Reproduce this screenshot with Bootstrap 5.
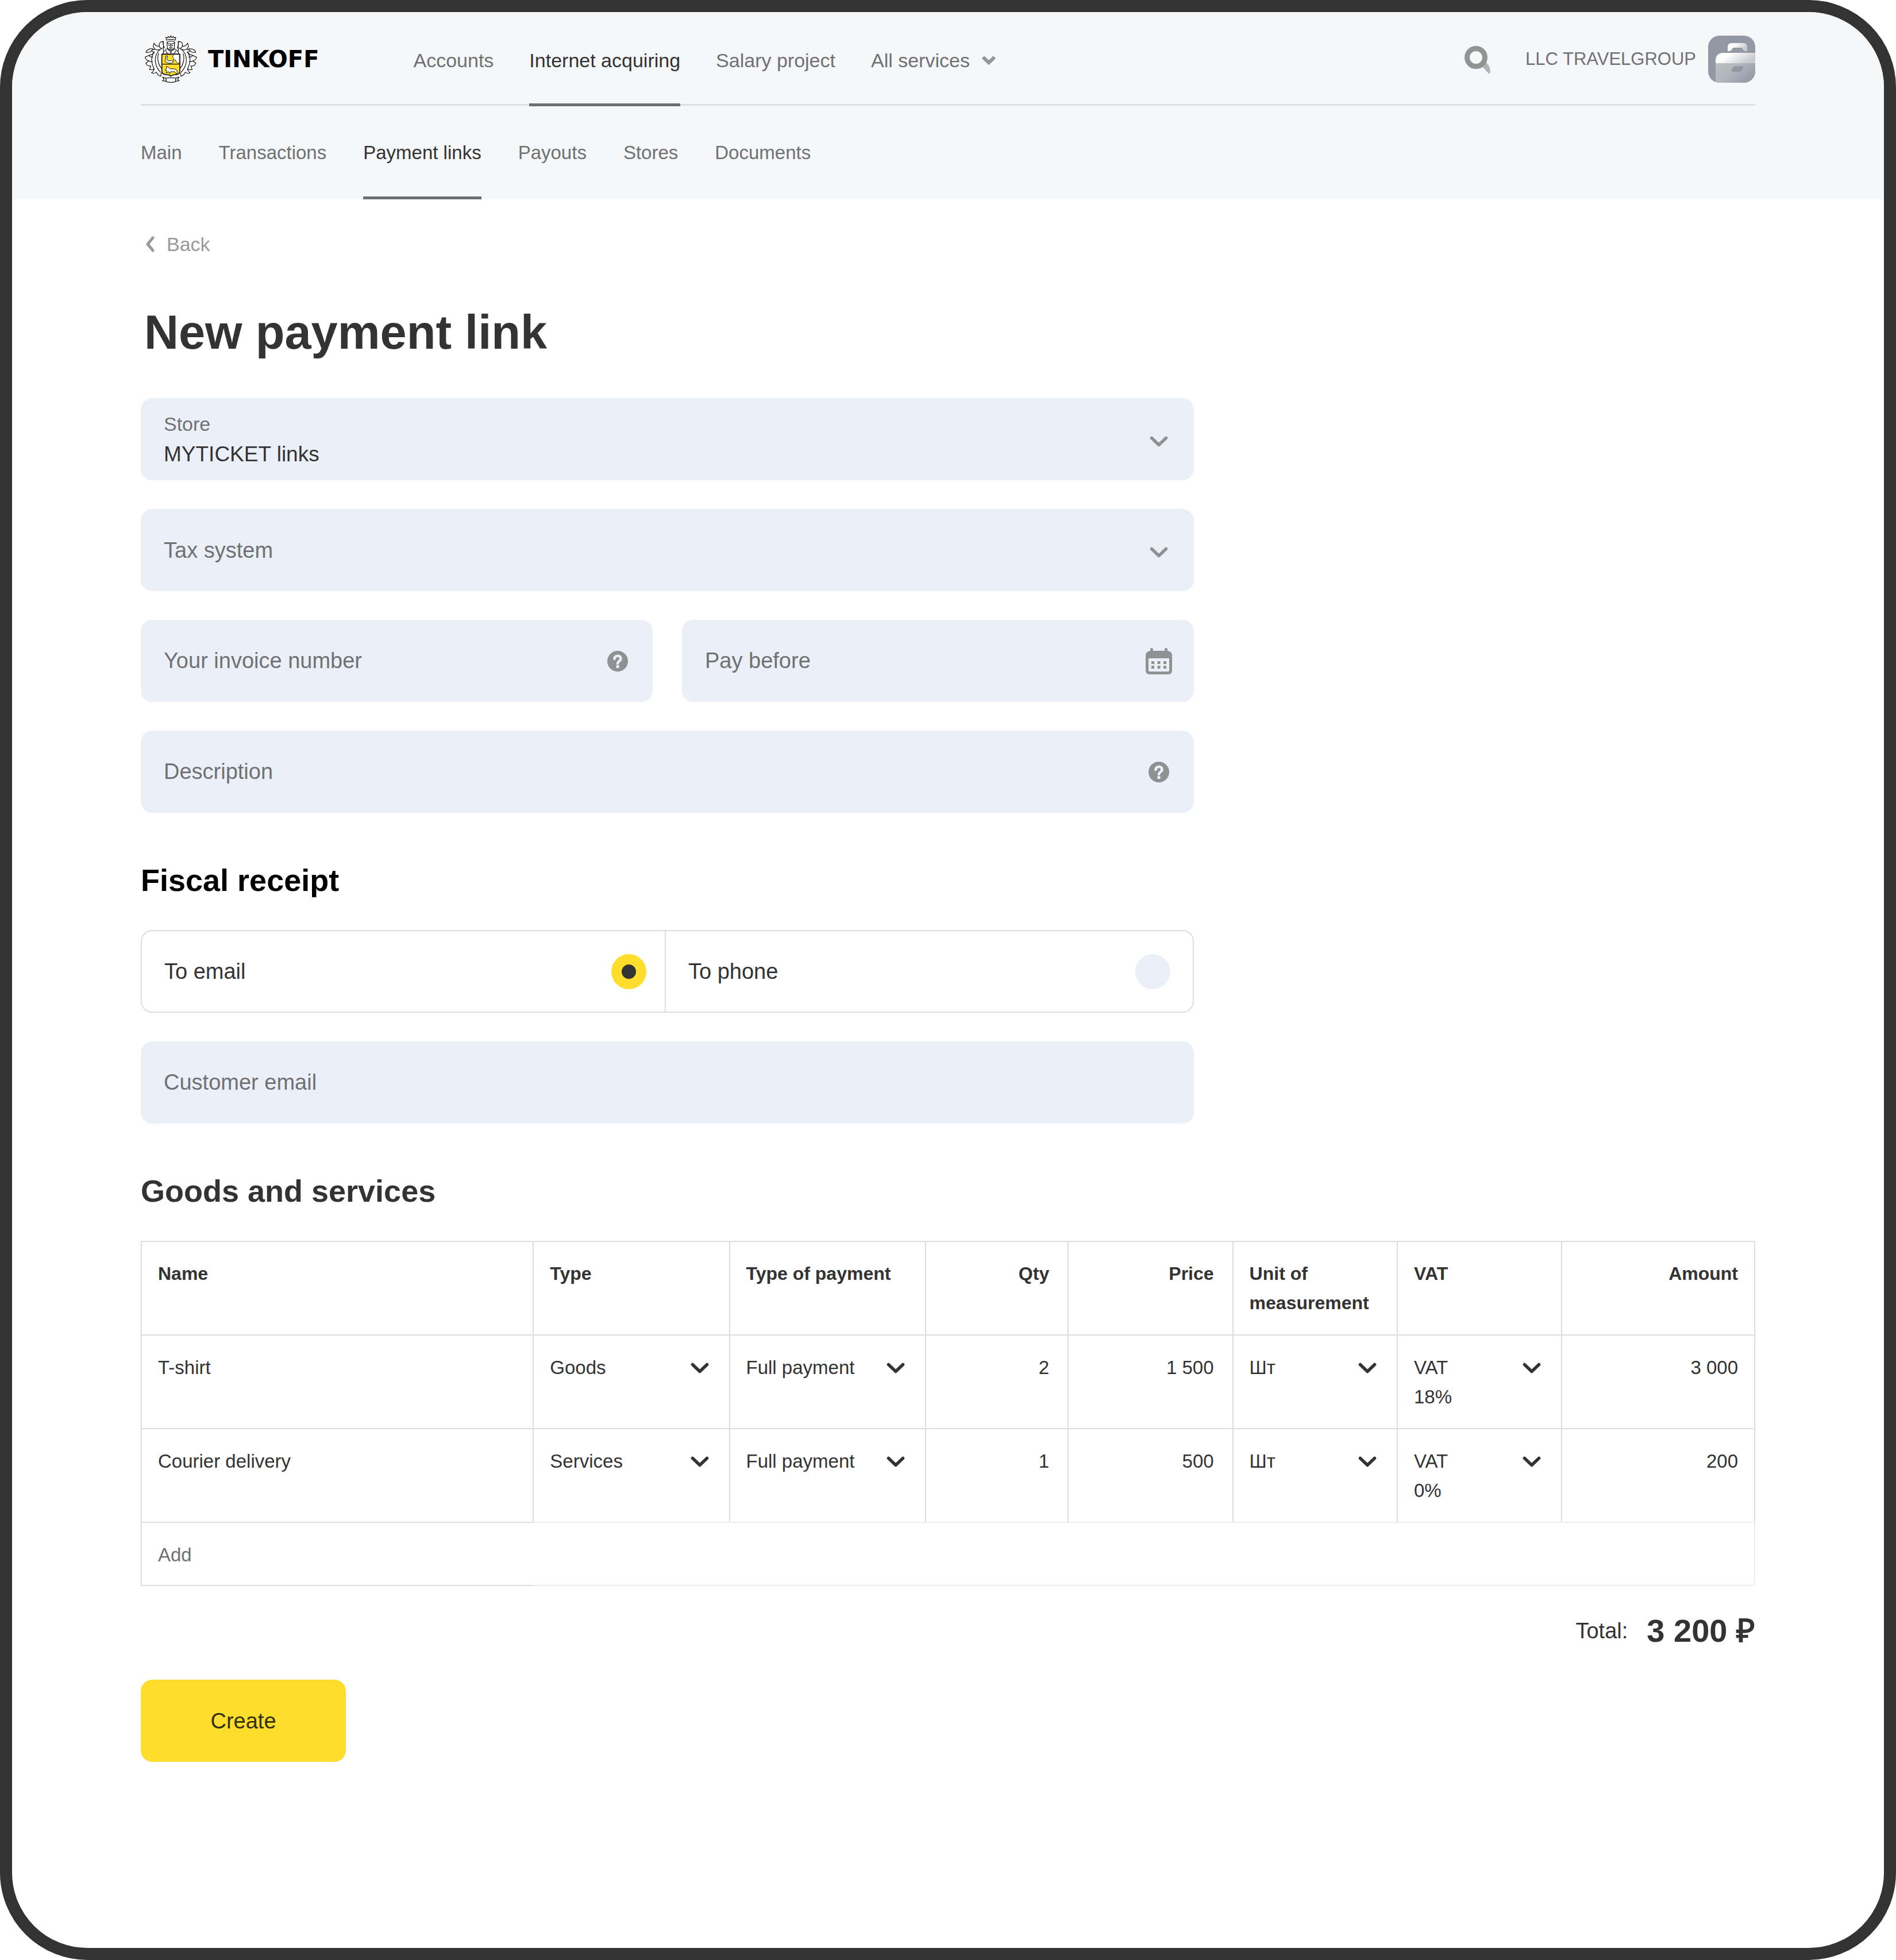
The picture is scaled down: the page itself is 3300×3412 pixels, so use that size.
<!DOCTYPE html>
<html lang="en">
<head>
<meta charset="utf-8">
<meta name="viewport" content="width=device-width, initial-scale=1">
<title>New payment link</title>
<link href="https://cdn.jsdelivr.net/npm/bootstrap@5.3.0/dist/css/bootstrap.min.css" rel="stylesheet">
<style>
  :root { --ink: #333; --muted: #707173; --field: #ebf0f8; --rule: #dedede; --brand: #ffdd2d; }
  body { font-family: "Liberation Sans", Arial, sans-serif; font-size: 34px; line-height: 50px; color: var(--ink); background: #fff; }
  a { text-decoration: none; }
  .frame { border: 21px solid #333; border-radius: 152px; }
  .gutter { padding-left: 224px; padding-right: 224px; }
  svg { flex: none; display: block; }

  .site-head { background: #f6f7f9; }
  .bar-top { height: 163px; padding-top: 3px; border-bottom: 3px solid #dfe0e1; }
  .bar-sub { height: 163px; gap: 64px; font-size: 33px; }
  .brand { gap: 17px; padding-left: 5px; color: #000; margin-right: 164px; font: bold 40px/50px "DejaVu Sans", sans-serif; }
  .main-menu { gap: 62px; }
  .tab { display: flex; align-items: center; gap: 20px; color: var(--muted); border-top: 5px solid transparent; border-bottom: 5px solid transparent; }
  .tab.active { color: var(--ink); border-bottom-color: #6e6f70; }
  .main-menu .tab { margin-bottom: -4px; }
  .plain-btn { background: none; border: 0; padding: 0; color: var(--muted); }
  .main-menu .plain-btn { border-top: 5px solid transparent; border-bottom: 5px solid transparent; }
  .account { font-size: 31px; color: var(--muted); gap: 21px; margin-left: 59px; }

  .page-body { padding-top: 53px; padding-bottom: 160px; }
  .back-link { color: #999; gap: 21px; padding-left: 8px; }
  h1 { font-size: 83px; line-height: 96px; font-weight: 700; margin: 81px 0 66px; padding-left: 6px; }
  h2 { font-size: 54px; line-height: 64px; font-weight: 700; margin: 85px 0 55px; }
  .form-col { max-width: 1833px; }
  .stack { display: flex; flex-direction: column; gap: 50px; }

  .field { display: grid; grid-template: 143px / 1fr; align-items: center; border-radius: 20px; background: var(--field); font-size: 38px; overflow: hidden; }
  .field > * { grid-area: 1 / 1; }
  .field .form-control, .field .form-select { height: 143px; border: 0; border-radius: 20px; background: transparent; padding: 0 110px 0 40px; font-size: 38px; line-height: 50px; color: var(--ink); }
  .field .form-control::placeholder { color: var(--muted); opacity: 1; }
  .field .form-select.unset { color: var(--muted); }
  .field .form-select.has-caption { padding-top: 53px; font-size: 37px; }
  .field label { align-self: start; font-size: 34px; line-height: 40px; margin: 25px 0 0 40px; color: var(--muted); pointer-events: none; }
  .field svg { justify-self: end; margin-right: 37px; pointer-events: none; color: #8f9193; }
  .pair { gap: 51px; }
  .pair .field { flex: 1; }
  .field svg.arrow { margin-top: 8px; }

  .choice { height: 144px; border: 2px solid var(--rule); border-radius: 20px; font-size: 38px; }
  .choice label { flex: 1; display: flex; align-items: center; justify-content: space-between; padding: 0 32px 0 39px; }
  .choice label + label { border-left: 2px solid var(--rule); padding-right: 39px; flex: 1 0 8px; }
  .choice input { appearance: none; width: 61px; height: 61px; border-radius: 50%; margin: 0; background: var(--field); }
  .choice input:checked { background: radial-gradient(circle, #333 12px, var(--brand) 13px); }

  .goods { table-layout: fixed; border-collapse: collapse; font-size: 33px; line-height: 51px; margin: 0; }
  .goods > * > tr > * { padding: 30px 32px 29px 28px; border: 2px solid var(--rule); color: var(--ink); vertical-align: top; box-shadow: none; background: none; }
  .goods thead th { font-size: 32px; font-weight: 700; }
  .goods > * > tr > :last-child { padding-right: 28px; }
  .goods tbody tr:last-child td:not(:first-child) { border-bottom-color: #ededed; }
  .goods > tfoot > tr > td { padding-bottom: 27px; }
  .goods > tfoot > tr > td:first-child { border-right: 0; }
  .goods > tfoot > tr > td:last-child { border-left: 0; border-color: #ededed; }
  .pick { display: grid; grid-template-columns: 1fr; }
  .pick select { grid-area: 1 / 1; appearance: none; border: 0; background: transparent; padding: 0; width: 100%; height: 51px; line-height: 51px; color: var(--ink); }
  .pick svg { grid-area: 1 / 1; justify-self: end; align-self: start; margin-top: 17px; margin-right: 3px; pointer-events: none; }
  .pick label { grid-area: 1 / 1; }
  .pick label ~ select { grid-area: 2 / 1; }

  .total { margin-top: 46px; gap: 33px; font-size: 38px; line-height: 64px; }
  .total strong { font-size: 56px; }
  .create { margin-top: 53px; width: 357px; height: 143px; border: 0; border-radius: 20px; background: var(--brand); color: #33300f; font-size: 38px; }
</style>
</head>
<body>
<svg width="0" height="0" class="position-absolute" aria-hidden="true">
  <defs>
    <symbol id="chev" viewBox="0 0 32 19"><path d="M3.500 3.500 16 15.500 28.500 3.500" fill="none" stroke="currentColor" stroke-width="5.500" stroke-linecap="round" stroke-linejoin="round"/></symbol>
    <symbol id="help" viewBox="0 0 48 48"><circle cx="24" cy="24" r="18" fill="currentColor"/><path d="M18.500 20c0-7 11-7 11-.5 0 4.500-5.500 4.500-5.500 8.500" fill="none" stroke="#ebf0f8" stroke-width="4.500" stroke-linecap="round"/><circle cx="24" cy="33.500" r="2.800" fill="#ebf0f8"/></symbol>
  </defs>
</svg>
<div class="frame min-vh-100 overflow-hidden">
  <header class="site-head gutter">
    <nav class="bar-top d-flex align-items-stretch" aria-label="Primary">
      <a href="#" class="brand d-flex align-items-center">
        <svg width="95" height="85" viewBox="90 60 285 255" aria-hidden="true">
          <defs>
            <g id="wing">
              <path d="M202 160C190 150 190 136 198 128C190 120 192 108 194 97C180 94 168 104 172 121C160 122 149 117 145 105C137 116 140 130 150 137C143 142 134 140 127 136C130 148 138 152 146 152C138 162 128 169 116 169C110 175 102 175 97 179C101 192 108 196 115 197C112 206 107 208 101 209C107 222 117 226 127 224C126 233 124 238 120 243C129 246 138 244 145 240C143 250 137 256 131 260C141 264 150 263 157 257C162 269 169 276 180 278C177 268 183 262 187 257L185 168Z"/>
              <path d="M102 153C107 139 121 133 139 135C134 147 121 157 102 153Z"/>
              <path d="M192 97C186 105 200 118 194 128C164 140 140 176 156 222C160 236 172 250 178 258M172 121C174 130 180 134 186 132M152 137C158 142 166 142 172 138M146 152C130 172 126 202 145 240M116 169C124 178 132 180 138 178M115 197C124 202 130 204 136 202M168 160C158 186 168 220 183 236" fill="none"/>
              <path d="M188 282L206 288L208 304L188 302L197 293Z"/>
            </g>
          </defs>
          <g fill="#fff" stroke="#fff" stroke-width="13" stroke-linejoin="round">
            <use href="#wing"/><use href="#wing" transform="translate(464 0) scale(-1 1)"/>
            <path d="M208 88L206 74L258 74L256 88ZM212 96H252V160H212ZM204 286H260V308H204Z"/>
          </g>
          <g fill="#fff" stroke="#111" stroke-width="3.500" stroke-linejoin="round" stroke-linecap="round">
            <use href="#wing"/><use href="#wing" transform="translate(464 0) scale(-1 1)"/>
            <path d="M209 90L206 74L215 79L219 70L226 77L232 67L238 77L245 70L249 79L258 74L255 90Q232 82 209 90Z"/>
            <path d="M212 100Q232 89 252 100L250 132Q242 139 232 142Q222 139 214 132Z"/>
            <path d="M212 104Q222 110 232 110Q242 110 252 104M232 110V138M220 117L227 119M244 117L237 119M226 127V132M238 127V132" fill="none"/>
            <path d="M214 134Q196 142 190 162H274Q268 142 250 134Q240 148 232 142Q224 148 214 134Z"/>
            <path d="M232 148V160M227 151H237M206 146L216 162M258 146L248 162" fill="none"/>
            <path d="M185 163H279V252Q279 270 252 270Q238 271 232 278Q226 271 212 270Q185 270 185 252Z" fill="#ffdd2d" stroke-width="5"/>
            <path d="M187 215H277" fill="none" stroke-width="4"/>
            <path d="M246 165L240 178L248 184L244 194L256 192L262 206L277 212V165Z" stroke-width="2.500"/>
            <path d="M206 173L215 172L211 190L218 198Q236 192 248 202Q240 212 218 210L204 202Z" stroke-width="3"/>
            <path d="M210 228L218 230Q226 242 240 240Q258 238 266 250L263 252Q268 258 262 268L258 262L252 254Q240 256 232 254L226 266L222 254L208 262L212 250L202 246L208 240Z" stroke-width="3"/>
            <path d="M206 288Q232 284 258 288L256 307Q232 313 208 307Z"/>
          </g>
        </svg>
        <span>TINKOFF</span>
      </a>
      <div class="main-menu d-flex">
        <a href="#" class="tab">Accounts</a>
        <a href="#" class="tab active" aria-current="true">Internet acquiring</a>
        <a href="#" class="tab">Salary project</a>
        <button type="button" class="tab plain-btn">All services
          <svg width="26" height="18" viewBox="0 0 26 18" aria-hidden="true"><path d="M3 3.500 13 13 23 3.500" fill="none" stroke="#959697" stroke-width="6"/></svg>
        </button>
      </div>
      <button type="button" class="plain-btn ms-auto" aria-label="Search">
        <svg width="48" height="52" viewBox="0 0 48 52" aria-hidden="true"><path d="M32 39 38 31Q46 38 46 48L44 52Z" fill="#b1b3b4"/><circle cx="21" cy="23" r="15.500" fill="none" stroke="#929393" stroke-width="9"/></svg>
      </button>
      <a href="#" class="account d-flex align-items-center">LLC TRAVELGROUP
        <svg width="82" height="82" viewBox="0 0 82 82" aria-hidden="true">
          <defs>
            <clipPath id="tile"><rect width="82" height="82" rx="20"/></clipPath>
            <linearGradient id="lid" x1="0" y1="0" x2="1" y2=".4"><stop offset=".35" stop-color="#fff"/><stop offset="1" stop-color="#c8cbce"/></linearGradient>
            <linearGradient id="bag" x1="0" y1="0" x2="1" y2=".6"><stop offset="0" stop-color="#bdc0c4"/><stop offset=".5" stop-color="#b1b5bd"/><stop offset="1" stop-color="#969da8"/></linearGradient>
          </defs>
          <g clip-path="url(#tile)">
            <rect width="82" height="82" fill="#9299a5"/>
            <path d="M34 27V20Q34 13 41 13H61Q68 13 68 20V27H66Q61 27 59 21H43Q41 27 36 27Z" fill="url(#lid)"/>
            <path d="M13 48V44Q13 30 27 30H82V48Z" fill="url(#lid)"/>
            <path d="M13 48H82V82H13Z" fill="url(#bag)"/>
            <path d="M41 63V60Q42 53 49 53H61V56Q60 63 53 63Z" fill="#9299a5"/>
          </g>
        </svg>
      </a>
    </nav>
    <nav class="bar-sub d-flex align-items-stretch" aria-label="Internet acquiring">
      <a href="#" class="tab">Main</a>
      <a href="#" class="tab">Transactions</a>
      <a href="#" class="tab active" aria-current="page">Payment links</a>
      <a href="#" class="tab">Payouts</a>
      <a href="#" class="tab">Stores</a>
      <a href="#" class="tab">Documents</a>
    </nav>
  </header>

  <main class="page-body gutter">
    <a href="#" class="back-link d-flex align-items-center">
      <svg width="16" height="28" viewBox="0 0 16 28" aria-hidden="true"><path d="M13 3 4 14 13 25" fill="none" stroke="#999" stroke-width="5" stroke-linecap="round" stroke-linejoin="round"/></svg>Back</a>
    <h1>New payment link</h1>
    <form>
      <div class="form-col">
        <div class="stack">
          <div class="field">
            <select id="store" class="form-select has-caption"><option>MYTICKET links</option></select>
            <label for="store">Store</label>
            <svg class="arrow" width="48" height="19"><use href="#chev" x="8" width="32" height="19"/></svg>
          </div>
          <div class="field">
            <select class="form-select unset" aria-label="Tax system"><option>Tax system</option></select>
            <svg class="arrow" width="48" height="19"><use href="#chev" x="8" width="32" height="19"/></svg>
          </div>
          <div class="pair d-flex">
            <div class="field">
              <input type="text" class="form-control" placeholder="Your invoice number" aria-label="Your invoice number">
              <svg width="48" height="48"><use href="#help"/></svg>
            </div>
            <div class="field">
              <input type="text" class="form-control" placeholder="Pay before" aria-label="Pay before">
              <svg width="48" height="48" viewBox="0 0 48 48" aria-hidden="true">
                <path fill="currentColor" fill-rule="evenodd" d="M9 6V3.500a2.500 2.500 0 0 1 5 0V6H34V3.500a2.500 2.500 0 0 1 5 0V6Q47 7 47 14V40Q47 47 40 47H8Q1 47 1 40V14Q1 7 9 6ZM6 19V40Q6 42 8 42H40Q42 42 42 40V19Z"/>
                <path fill="currentColor" d="M11 24h5v5h-5zM21.500 24h5v5h-5zM32 24h5v5h-5zM11 32h5v5h-5zM21.500 32h5v5h-5zM32 32h5v5h-5z"/>
              </svg>
            </div>
          </div>
          <div class="field">
            <input type="text" class="form-control" placeholder="Description" aria-label="Description">
            <svg width="48" height="48"><use href="#help"/></svg>
          </div>
        </div>

        <h2 class="text-black">Fiscal receipt</h2>
        <div class="stack">
          <div class="choice d-flex" role="radiogroup" aria-label="Fiscal receipt">
            <label>To email <input type="radio" name="receipt" checked></label>
            <label>To phone <input type="radio" name="receipt"></label>
          </div>
          <div class="field">
            <input type="email" class="form-control" placeholder="Customer email" aria-label="Customer email">
          </div>
        </div>
      </div>

      <h2>Goods and services</h2>
      <table class="table goods">
        <colgroup>
          <col style="width:24.3%"><col style="width:12.15%"><col style="width:12.15%"><col style="width:8.85%"><col style="width:10.2%"><col style="width:10.2%"><col style="width:10.2%"><col>
        </colgroup>
        <thead>
          <tr><th>Name</th><th>Type</th><th>Type of payment</th><th class="text-end">Qty</th><th class="text-end">Price</th><th>Unit of measurement</th><th>VAT</th><th class="text-end">Amount</th></tr>
        </thead>
        <tbody>
          <tr>
            <td>T-shirt</td>
            <td><div class="pick"><select aria-label="Type"><option>Goods</option></select><svg width="32" height="19"><use href="#chev"/></svg></div></td>
            <td><div class="pick"><select aria-label="Type of payment"><option>Full payment</option></select><svg width="32" height="19"><use href="#chev"/></svg></div></td>
            <td class="text-end">2</td>
            <td class="text-end">1 500</td>
            <td><div class="pick"><select aria-label="Unit of measurement"><option>Шт</option></select><svg width="32" height="19"><use href="#chev"/></svg></div></td>
            <td><div class="pick"><label for="vat1">VAT</label><svg width="32" height="19"><use href="#chev"/></svg><select id="vat1"><option>18%</option></select></div></td>
            <td class="text-end">3 000</td>
          </tr>
          <tr>
            <td>Courier delivery</td>
            <td><div class="pick"><select aria-label="Type"><option>Services</option></select><svg width="32" height="19"><use href="#chev"/></svg></div></td>
            <td><div class="pick"><select aria-label="Type of payment"><option>Full payment</option></select><svg width="32" height="19"><use href="#chev"/></svg></div></td>
            <td class="text-end">1</td>
            <td class="text-end">500</td>
            <td><div class="pick"><select aria-label="Unit of measurement"><option>Шт</option></select><svg width="32" height="19"><use href="#chev"/></svg></div></td>
            <td><div class="pick"><label for="vat2">VAT</label><svg width="32" height="19"><use href="#chev"/></svg><select id="vat2"><option>0%</option></select></div></td>
            <td class="text-end">200</td>
          </tr>
        </tbody>
        <tfoot>
          <tr><td><button type="button" class="plain-btn d-block">Add</button></td><td colspan="7"></td></tr>
        </tfoot>
      </table>
      <div class="total d-flex justify-content-end align-items-center"><span>Total:</span><strong>3 200 ₽</strong></div>
      <button type="submit" class="create d-block">Create</button>
    </form>
  </main>
</div>
<script src="https://cdn.jsdelivr.net/npm/bootstrap@5.3.0/dist/js/bootstrap.bundle.min.js"></script>
</body>
</html>
